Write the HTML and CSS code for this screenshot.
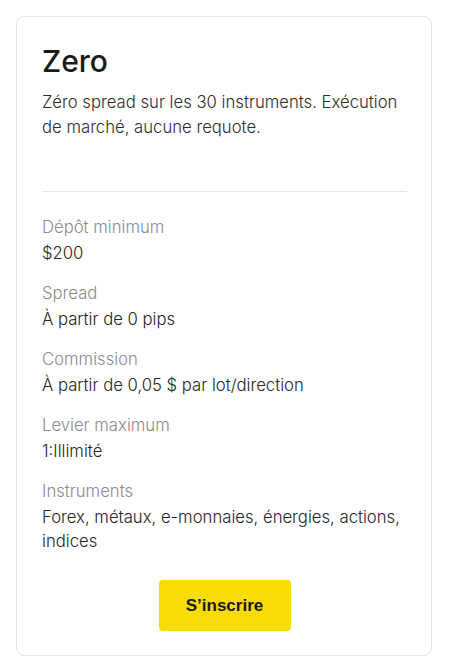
FILE: index.html
```html
<!DOCTYPE html>
<html lang="fr">
<head>
<meta charset="utf-8">
<title>Zero</title>
<link rel="stylesheet" href="styles.css">
</head>
<body>
<div class="page">
  <section class="card">
    <h2 class="card-title">Zero</h2>
    <p class="card-desc">Zéro spread sur les 30 instruments. Exécution de marché, aucune requote.</p>
    <hr class="divider">
    <dl class="specs">
      <div class="spec">
        <dt class="spec-label">Dépôt minimum</dt>
        <dd class="spec-value">$200</dd>
      </div>
      <div class="spec">
        <dt class="spec-label">Spread</dt>
        <dd class="spec-value">À partir de 0 pips</dd>
      </div>
      <div class="spec">
        <dt class="spec-label">Commission</dt>
        <dd class="spec-value">À partir de 0,05 $ par lot/direction</dd>
      </div>
      <div class="spec">
        <dt class="spec-label">Levier maximum</dt>
        <dd class="spec-value">1:Illimité</dd>
      </div>
      <div class="spec">
        <dt class="spec-label">Instruments</dt>
        <dd class="spec-value">Forex, métaux, e-monnaies, énergies, actions, indices</dd>
      </div>
    </dl>
    <div class="actions">
      <a class="btn" href="#">S’inscrire</a>
    </div>
  </section>
</div>
</body>
</html>
```
FILE: styles.css
```css
* { box-sizing: border-box; }
html, body { margin: 0; padding: 0; background: #ffffff; }
body { font-family: Inter, "Noto Sans", sans-serif; color: #262626; }
.page { padding: 16px 17px 16px 16px; }
.card {
  width: 416px;
  border: 1px solid #e4e4e4;
  border-radius: 8px;
  padding: 26px 24px 24px 25px;
  display: flex;
  flex-direction: column;
}
.card-title {
  margin: 0;
  font-size: 30px;
  line-height: 36px;
  font-weight: 500;
  color: #1a1a1a;
}
.card-desc {
  margin: 11px 0 0;
  font-size: 16.7px;
  line-height: 25px;
  font-weight: 350;
  color: #2e2e2e;
}
.divider {
  margin: 51px 0 0;
  border: 0;
  border-top: 1px solid #e6e6e6;
  height: 0;
}
.specs {
  margin: 22px 0 0;
  display: flex;
  flex-direction: column;
  gap: 15px;
}
.spec { display: flex; flex-direction: column; }
.spec-label {
  font-size: 16.7px;
  line-height: 26px;
  font-weight: 350;
  color: #8c8c8c;
}
.spec-value {
  margin: 1px 0 0;
  font-size: 16.7px;
  line-height: 24px;
  font-weight: 350;
  color: #262626;
}
.actions {
  margin-top: 27px;
  display: flex;
  justify-content: center;
}
.btn {
  width: 132px;
  height: 51px;
  display: flex;
  align-items: center;
  justify-content: center;
  background: #f9dc04;
  border-radius: 4px;
  font-family: "Liberation Sans", Arial, sans-serif;
  font-weight: 700;
  font-size: 17px;
  color: #1a1a1a;
  text-decoration: none;
}
```
